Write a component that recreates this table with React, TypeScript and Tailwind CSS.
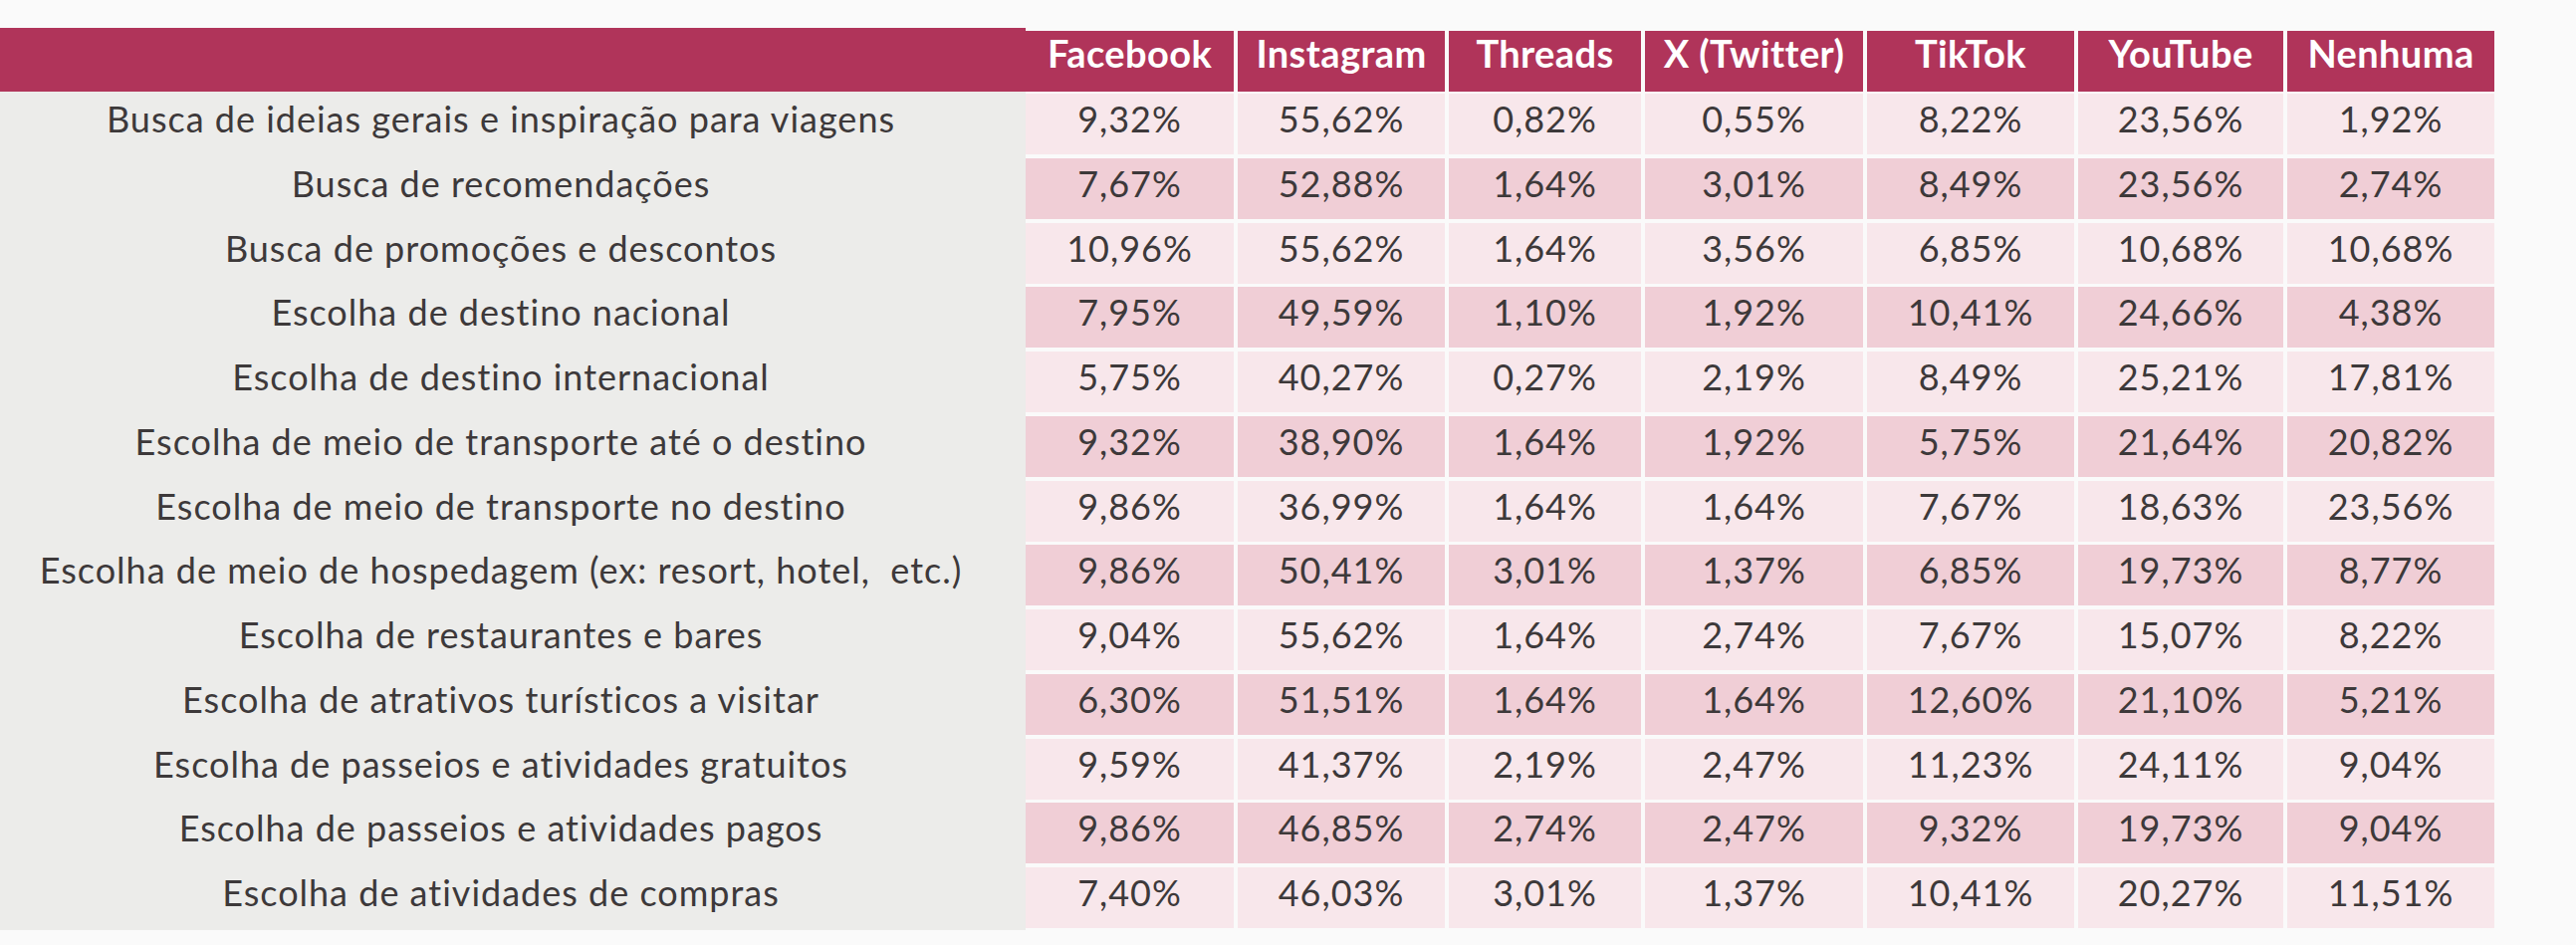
import React from 'react';

const columns = [
  { name: 'Facebook', w: 'w-[209px]' },
  { name: 'Instagram', w: 'w-[208px]' },
  { name: 'Threads', w: 'w-[193px]' },
  { name: 'X (Twitter)', w: 'w-[219px]' },
  { name: 'TikTok', w: 'w-[208px]' },
  { name: 'YouTube', w: 'w-[206px]' },
  { name: 'Nenhuma', w: 'w-[208px]' },
];

const rows: [string, string[]][] = [
  ['Busca de ideias gerais e inspiração para viagens', ['9,32%', '55,62%', '0,82%', '0,55%', '8,22%', '23,56%', '1,92%']],
  ['Busca de recomendações', ['7,67%', '52,88%', '1,64%', '3,01%', '8,49%', '23,56%', '2,74%']],
  ['Busca de promoções e descontos', ['10,96%', '55,62%', '1,64%', '3,56%', '6,85%', '10,68%', '10,68%']],
  ['Escolha de destino nacional', ['7,95%', '49,59%', '1,10%', '1,92%', '10,41%', '24,66%', '4,38%']],
  ['Escolha de destino internacional', ['5,75%', '40,27%', '0,27%', '2,19%', '8,49%', '25,21%', '17,81%']],
  ['Escolha de meio de transporte até o destino', ['9,32%', '38,90%', '1,64%', '1,92%', '5,75%', '21,64%', '20,82%']],
  ['Escolha de meio de transporte no destino', ['9,86%', '36,99%', '1,64%', '1,64%', '7,67%', '18,63%', '23,56%']],
  ['Escolha de meio de hospedagem (ex: resort, hotel,  etc.)', ['9,86%', '50,41%', '3,01%', '1,37%', '6,85%', '19,73%', '8,77%']],
  ['Escolha de restaurantes e bares', ['9,04%', '55,62%', '1,64%', '2,74%', '7,67%', '15,07%', '8,22%']],
  ['Escolha de atrativos turísticos a visitar', ['6,30%', '51,51%', '1,64%', '1,64%', '12,60%', '21,10%', '5,21%']],
  ['Escolha de passeios e atividades gratuitos', ['9,59%', '41,37%', '2,19%', '2,47%', '11,23%', '24,11%', '9,04%']],
  ['Escolha de passeios e atividades pagos', ['9,86%', '46,85%', '2,74%', '2,47%', '9,32%', '19,73%', '9,04%']],
  ['Escolha de atividades de compras', ['7,40%', '46,03%', '3,01%', '1,37%', '10,41%', '20,27%', '11,51%']],
];

export default function App() {
  return (
    <div className="min-h-screen bg-[#fafafa] pt-[28px] text-[#3d393a] font-['Lato','Liberation_Sans',sans-serif]">
      {/* header */}
      <div className="flex h-[64px]">
        <div className="w-[1030px] bg-[#b0345a]" />
        <div className="flex gap-[4px] pt-[3px]">
          {columns.map((c) => (
            <div
              key={c.name}
              className={`${c.w} h-[61px] bg-[#b0345a] text-white font-bold text-[38px] leading-[1.2] tracking-[0.4px] text-center whitespace-nowrap`}
            >
              {c.name}
            </div>
          ))}
        </div>
      </div>

      {/* body */}
      {rows.map(([label, values], i) => (
        <div key={label} className="flex h-[64.75px]">
          <div className="w-[1030px] bg-[#ececea] pr-[24px] pt-[6px] text-[36px] leading-[1.2] tracking-[1px] text-center whitespace-pre">
            {label}
          </div>
          <div className="flex gap-[4px] pt-[2px]">
            {values.map((v, j) => (
              <div
                key={j}
                className={`${columns[j].w} h-[61px] pt-[4px] text-[36px] leading-[1.2] tracking-[1px] text-center ${
                  i % 2 === 0 ? 'bg-[#f8e7eb]' : 'bg-[#f0ced6]'
                }`}
              >
                {v}
              </div>
            ))}
          </div>
        </div>
      ))}
    </div>
  );
}
